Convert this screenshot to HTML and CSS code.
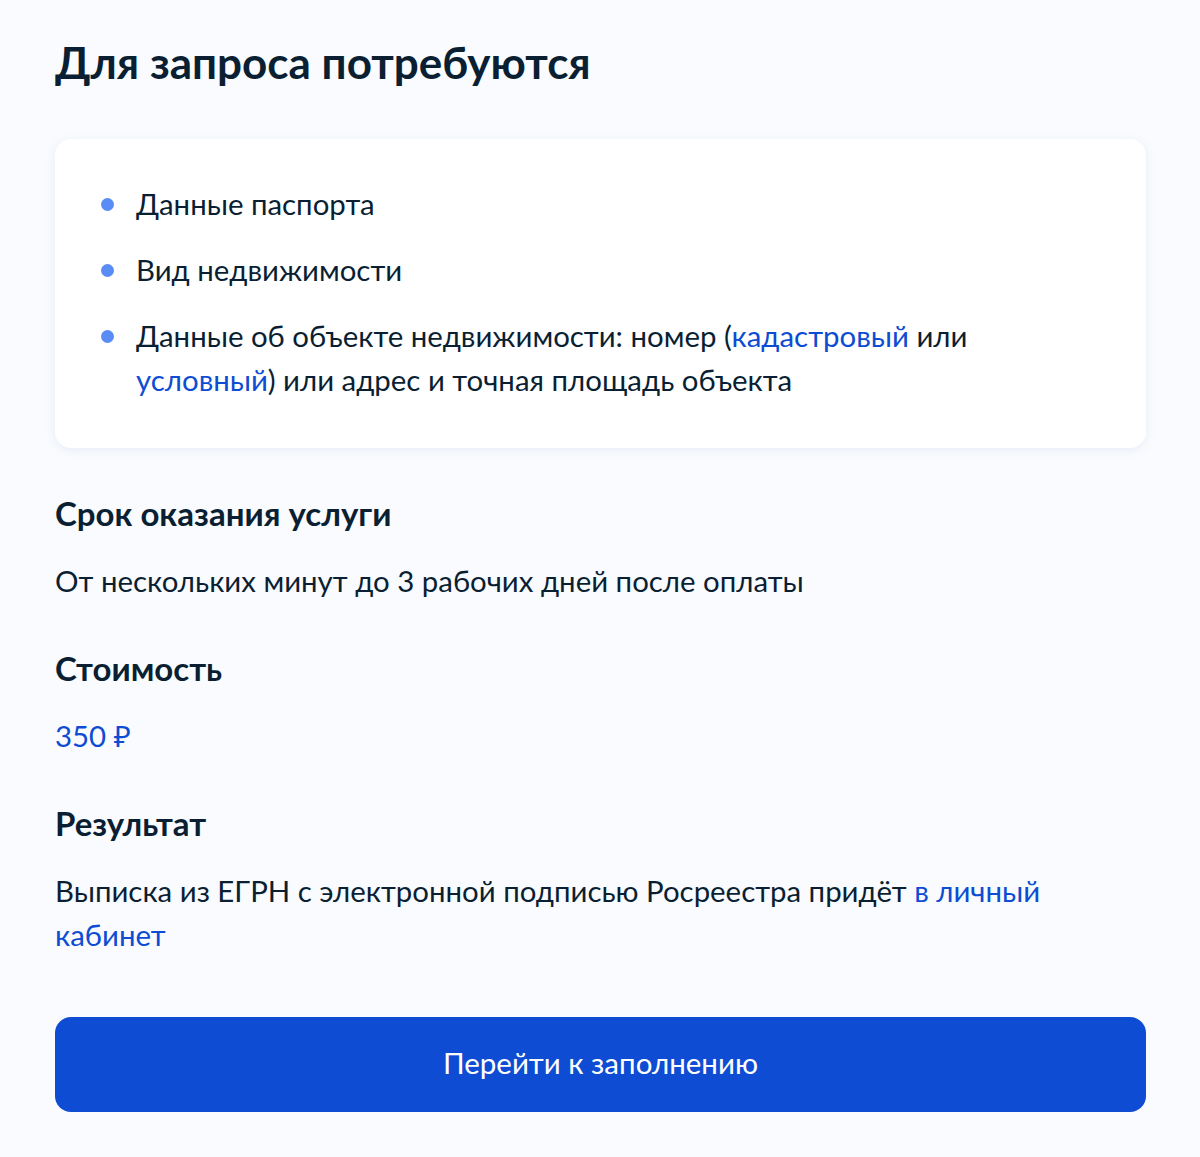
FILE: index.html
```html
<!DOCTYPE html>
<html lang="ru">
<head>
<meta charset="utf-8">
<link rel="stylesheet" href="styles.css">
</head>
<body>
<main class="page">
  <h1 class="title">Для запроса потребуются</h1>
  <section class="card">
    <ul class="list">
      <li class="item">Данные паспорта</li>
      <li class="item">Вид недвижимости</li>
      <li class="item">Данные об объекте недвижимости: номер (<a class="link" href="#">кадастровый</a> или <a class="link" href="#">условный</a>) или адрес и точная площадь объекта</li>
    </ul>
  </section>
  <section class="block">
    <h2 class="heading">Срок оказания услуги</h2>
    <p class="text">От нескольких минут до 3 рабочих дней после оплаты</p>
  </section>
  <section class="block">
    <h2 class="heading">Стоимость</h2>
    <p class="text price">350 ₽</p>
  </section>
  <section class="block">
    <h2 class="heading">Результат</h2>
    <p class="text">Выписка из ЕГРН с электронной подписью Росреестра придёт <a class="link" href="#">в личный кабинет</a></p>
  </section>
  <button class="button" type="button">Перейти к заполнению</button>
</main>
</body>
</html>
```

FILE: styles.css
```css
html, body {
  margin: 0;
  padding: 0;
  background: #f9fbfe;
}
body {
  font-family: Lato, "Noto Sans", sans-serif;
  color: #0b1f33;
}
.page {
  padding: 36px 54px 45px 55px;
  display: flex;
  flex-direction: column;
}
.title {
  margin: 0;
  font-size: 44px;
  line-height: 52px;
  font-weight: 700;
}
.card {
  margin-top: 51px;
  background: #fff;
  border-radius: 16px;
  box-shadow: 0 2px 10px rgba(130, 150, 190, 0.14);
  padding: 43px 44px 46px 46px;
}
.list {
  list-style: none;
  margin: 0;
  padding: 0;
  display: flex;
  flex-direction: column;
  gap: 22px;
}
.item {
  position: relative;
  padding-left: 35px;
  font-size: 29.4px;
  line-height: 44px;
}
.item::before {
  content: "";
  position: absolute;
  left: 0;
  top: 16px;
  width: 13px;
  height: 13px;
  border-radius: 50%;
  background: #5a8cf5;
}
.link {
  color: #0d4cd3;
  text-decoration: none;
}
.block {
  margin-top: 43px;
}
.heading {
  margin: 0;
  font-size: 33px;
  line-height: 44px;
  font-weight: 700;
}
.text {
  margin: 24px 0 0;
  font-size: 29.4px;
  line-height: 44px;
}
.price {
  color: #0d4cd3;
}
.button {
  margin-top: 60px;
  height: 95px;
  padding: 0 0 5px;
  border: none;
  border-radius: 16px;
  background: #0d4cd3;
  color: #fff;
  font-family: Lato, "Noto Sans", sans-serif;
  font-size: 29.5px;
  font-weight: 400;
}
```
